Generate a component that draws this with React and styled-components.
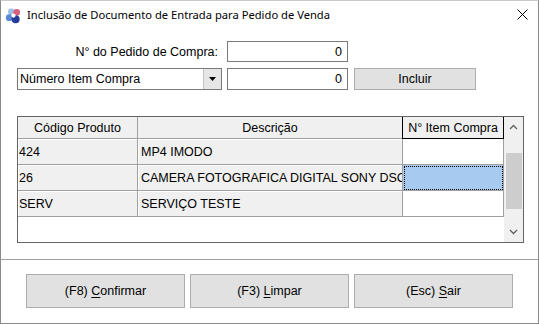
import React from "react";
import styled, { createGlobalStyle } from "styled-components";

const GlobalStyle = createGlobalStyle`
  html, body {
    margin: 0;
    padding: 0;
    background: #ffffff;
    overflow: hidden;
  }
  body {
    font-family: "Liberation Sans", Arial, sans-serif;
    font-size: 12.5px;
    color: #000;
  }
`;

const Window = styled.div`
  width: 539px;
  height: 324px;
  box-sizing: border-box;
  border: 1px solid #8a8a8a;
  border-top-color: #c9c9c9;
  background: #fff;
  display: flex;
  flex-direction: column;
`;

const TitleBar = styled.div`
  height: 29px;
  display: flex;
  align-items: center;
  padding-left: 4px;
  gap: 5px;
  font-family: "Noto Sans", "Open Sans", sans-serif;
  font-size: 11.2px;
  color: #000;
`;

const TitleText = styled.span`
  flex: 1;
  margin-top: -3px;
`;

const CloseBtn = styled.div`
  width: 32px;
  height: 29px;
  display: flex;
  align-items: center;
  justify-content: center;
  margin-top: -2px;
`;

const Content = styled.div`
  height: 229px;
  box-sizing: border-box;
  padding: 11px 0 0 16px;
  display: flex;
  flex-direction: column;
`;

const Form = styled.div`
  display: grid;
  grid-template-columns: 205px 121px 122px;
  grid-template-rows: 21px 22px;
  column-gap: 5px;
  row-gap: 6px;
`;

const Label = styled.div`
  display: flex;
  align-items: center;
  justify-content: flex-end;
  padding-right: 4px;
`;

const Input = styled.div`
  box-sizing: border-box;
  border: 1px solid #7a7a7a;
  background: #fff;
  display: flex;
  align-items: center;
  justify-content: flex-end;
  padding-right: 5px;
`;

const Combo = styled.div`
  box-sizing: border-box;
  border: 1px solid #7a7a7a;
  background: #fff;
  display: flex;
  align-items: stretch;
`;

const ComboText = styled.div`
  flex: 1;
  display: flex;
  align-items: center;
  padding-left: 2px;
`;

const ComboArrow = styled.div`
  width: 17px;
  background: #e6e6e6;
  border-left: 1px solid #c4c4c4;
  display: flex;
  align-items: center;
  justify-content: center;
`;

const Button = styled.button`
  box-sizing: border-box;
  border: 1px solid #adadad;
  background: #e1e1e1;
  font-family: "Liberation Sans", Arial, sans-serif;
  font-size: 12.5px;
  color: #000;
  padding: 0;
  width: ${(p) => p.$w || 159}px;
  height: ${(p) => p.$h || 34}px;
  margin-left: ${(p) => p.$ml || 0}px;
  cursor: default;
  u {
    text-decoration: underline;
    text-underline-offset: 2px;
  }
`;

const GridFrame = styled.div`
  margin-top: 26px;
  width: 507px;
  height: 127px;
  box-sizing: border-box;
  border: 1px solid #646464;
  display: flex;
`;

const Table = styled.div`
  flex: 1;
  display: grid;
  grid-template-columns: 120px 265px 101px;
  grid-template-rows: 22px 26px 26px 26px;
  align-content: start;
`;

const HeadCell = styled.div`
  box-sizing: border-box;
  background: #f0f0f0;
  border-right: 1px solid ${(p) => (p.$active ? "#000" : "#a0a0a0")};
  border-bottom: 1px solid ${(p) => (p.$active ? "#000" : "#a0a0a0")};
  border-left: ${(p) => (p.$active ? "1px solid #000" : "none")};
  margin-left: ${(p) => (p.$active ? "-1px" : "0")};
  display: flex;
  align-items: center;
  justify-content: center;
  white-space: nowrap;
  overflow: hidden;
`;

const Cell = styled.div`
  box-sizing: border-box;
  background: ${(p) => (p.$fixed ? "#f0f0f0" : p.$selected ? "#a6caf0" : "#fff")};
  border-right: 1px solid #a0a0a0;
  border-bottom: 1px solid #a0a0a0;
  box-shadow: ${(p) => (p.$fixed ? "inset 1px 1px 0 #fff" : "none")};
  outline: ${(p) => (p.$selected ? "1px dotted #000" : "none")};
  outline-offset: -2px;
  display: flex;
  align-items: center;
  padding-left: ${(p) => (p.$pad || 2)}px;
  white-space: nowrap;
  overflow: hidden;
`;

const ScrollBar = styled.div`
  width: 19px;
  background: #f0f0f0;
  display: flex;
  flex-direction: column;
`;

const ScrollBtn = styled.div`
  height: 20px;
  display: flex;
  align-items: center;
  justify-content: center;
`;

const Track = styled.div`
  flex: 1;
  padding: 16px 1px 0 2px;
`;

const Thumb = styled.div`
  height: 56px;
  background: #cdcdcd;
`;

const Separator = styled.div`
  height: 1px;
  background: #a0a0a0;
`;

const Footer = styled.div`
  flex: 1;
  display: flex;
  align-items: flex-start;
  padding: 14px 0 0 25px;
  gap: 5px;
`;

const AppIcon = () => (
  <svg width="17" height="17" viewBox="0 0 16 16">
    <circle cx="6" cy="4.5" r="3.2" fill="#9cc0ea" />
    <circle cx="11" cy="5" r="3.2" fill="#d9607a" />
    <circle cx="4" cy="10" r="3.2" fill="#5a86d6" />
    <circle cx="10" cy="11.5" r="3.8" fill="#243c9a" />
    <circle cx="8" cy="8" r="2" fill="#fff" />
  </svg>
);

const CloseIcon = () => (
  <svg width="11" height="11" viewBox="0 0 11 11">
    <path d="M0.5 0.5 L10.5 10.5 M10.5 0.5 L0.5 10.5" stroke="#000" strokeWidth="1" />
  </svg>
);

const Chevron = ({ up }) => (
  <svg width="9" height="6" viewBox="0 0 9 6">
    <path
      d={up ? "M1 5 L4.5 1.5 L8 5" : "M1 1 L4.5 4.5 L8 1"}
      stroke="#606060"
      strokeWidth="1.3"
      fill="none"
    />
  </svg>
);

const rows = [
  { code: "424", desc: "MP4 IMODO" },
  { code: "26", desc: "CAMERA FOTOGRAFICA DIGITAL SONY DSC-W800", selected: true },
  { code: "SERV", desc: "SERVIÇO TESTE" },
];

export default function App() {
  return (
    <>
      <GlobalStyle />
      <Window>
        <TitleBar>
          <AppIcon />
          <TitleText>Inclusão de Documento de Entrada para Pedido de Venda</TitleText>
          <CloseBtn>
            <CloseIcon />
          </CloseBtn>
        </TitleBar>
        <Content>
          <Form>
            <Label>N° do Pedido de Compra:</Label>
            <Input>0</Input>
            <div />
            <Combo>
              <ComboText>Número Item Compra</ComboText>
              <ComboArrow>
                <svg width="7" height="4" viewBox="0 0 7 4">
                  <path d="M0 0 L7 0 L3.5 4 Z" fill="#000" />
                </svg>
              </ComboArrow>
            </Combo>
            <Input>0</Input>
            <Button $w={122} $h={22} $ml={1}>Incluir</Button>
          </Form>
          <GridFrame>
            <Table>
              <HeadCell>Código Produto</HeadCell>
              <HeadCell>Descrição</HeadCell>
              <HeadCell $active>N° Item Compra</HeadCell>
              {rows.map((r) => (
                <React.Fragment key={r.code}>
                  <Cell $fixed $pad={1}>{r.code}</Cell>
                  <Cell $fixed $pad={3}>{r.desc}</Cell>
                  <Cell $selected={r.selected} />
                </React.Fragment>
              ))}
            </Table>
            <ScrollBar>
              <ScrollBtn>
                <Chevron up />
              </ScrollBtn>
              <Track>
                <Thumb />
              </Track>
              <ScrollBtn>
                <Chevron />
              </ScrollBtn>
            </ScrollBar>
          </GridFrame>
        </Content>
        <Separator />
        <Footer>
          <Button>
            (F8) <u>C</u>onfirmar
          </Button>
          <Button>
            (F3) <u>L</u>impar
          </Button>
          <Button>
            (Esc) <u>S</u>air
          </Button>
        </Footer>
      </Window>
    </>
  );
}
